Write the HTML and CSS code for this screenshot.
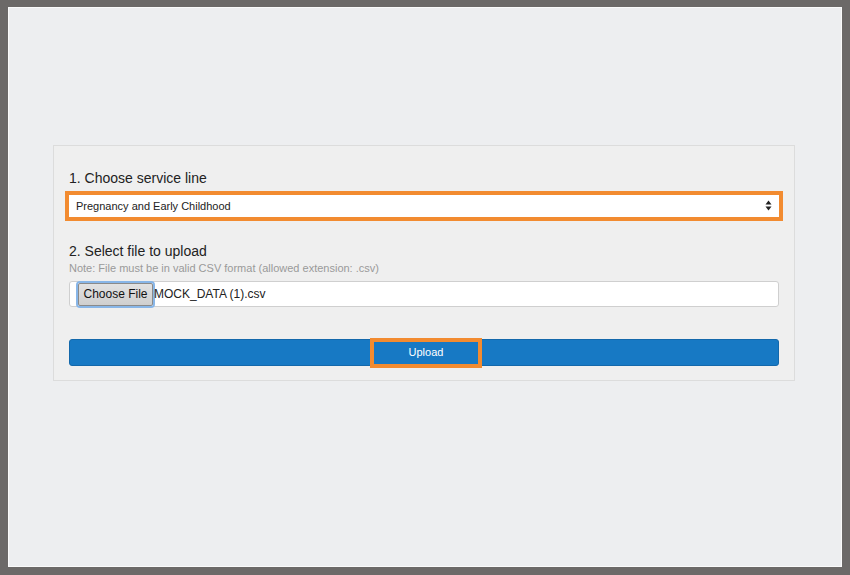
FILE: index.html
```html
<!DOCTYPE html>
<html>
<head>
<meta charset="utf-8">
<link rel="stylesheet" href="styles.css">
</head>
<body>
<div class="frame">
  <div class="panel">
    <div class="label">1. Choose service line</div>
    <div class="highlight-select">
      <div class="select">
        <span>Pregnancy and Early Childhood</span>
        <svg class="arrows" width="7" height="11" viewBox="0 0 7 11"><path d="M3.5 0.5 L6.5 4.5 L0.5 4.5 Z M3.5 10.5 L6.5 6.5 L0.5 6.5 Z" fill="#222"/></svg>
      </div>
    </div>
    <div class="label label-2">2. Select file to upload</div>
    <div class="note">Note: File must be in valid CSV format (allowed extension: .csv)</div>
    <div class="file">
      <span class="choose">Choose File</span>
      <span class="filename">MOCK_DATA (1).csv</span>
    </div>
    <div class="upload">
      Upload
      <div class="upload-ring"></div>
    </div>
  </div>
</div>
</body>
</html>
```
FILE: styles.css
```css
html, body {
  margin: 0;
  padding: 0;
}
body {
  width: 850px;
  height: 575px;
  background: #6c6968;
  font-family: "Liberation Sans", Arial, sans-serif;
  overflow: hidden;
}
.frame {
  box-sizing: border-box;
  margin: 7px 0 0 8px;
  width: 834px;
  height: 560px;
  background: #edeef0;
  border: 1px solid #fafafa;
  padding: 137px 0 0 44px;
}
.panel {
  position: relative;
  box-sizing: border-box;
  width: 742px;
  height: 236px;
  background: #efefef;
  border: 1px solid #dcdcdc;
  padding: 22px 15px 15px 15px;
}
.label {
  font-size: 14px;
  line-height: 20px;
  color: #222;
}
.highlight-select {
  margin: 3px -4px 0 -4px;
  height: 30px;
  box-sizing: border-box;
  border: 4px solid #f28b30;
  background: #fff;
  padding: 1px;
}
.select {
  height: 20px;
  box-sizing: border-box;
  padding: 0 6px 1px 6px;
  display: flex;
  align-items: center;
  justify-content: space-between;
  font-size: 11px;
  color: #222;
  background: #fff;
}
.arrows {
  display: block;
}
.label-2 {
  margin-top: 20px;
}
.note {
  font-size: 11px;
  line-height: 14px;
  color: #9a9a9a;
}
.file {
  margin-top: 6px;
  height: 26px;
  box-sizing: border-box;
  background: #fff;
  border: 1px solid #cfcfcf;
  border-radius: 3px;
  display: flex;
  align-items: center;
  padding-left: 8px;
  font-size: 12px;
  color: #222;
}
.choose {
  box-sizing: border-box;
  height: 23px;
  width: 75px;
  display: flex;
  align-items: center;
  justify-content: center;
  background: linear-gradient(#e2e2e2, #cfcfcf);
  border: 1px solid #8a8a8a;
  border-radius: 2px;
  box-shadow: 0 0 0 2px #88b6e8;
  color: #111;
}
.filename {
  margin-left: 1px;
}
.upload {
  position: relative;
  margin-top: 32px;
  height: 27px;
  box-sizing: border-box;
  background: #1779c4;
  border: 1px solid #1368ab;
  border-radius: 3px;
  color: #fff;
  font-size: 11px;
  display: flex;
  align-items: center;
  justify-content: center;
  padding: 0 0 2px 4px;
}
.upload-ring {
  position: absolute;
  left: 300px;
  top: -2px;
  width: 112px;
  height: 30px;
  box-sizing: border-box;
  border: 4px solid #f28b30;
}
```
